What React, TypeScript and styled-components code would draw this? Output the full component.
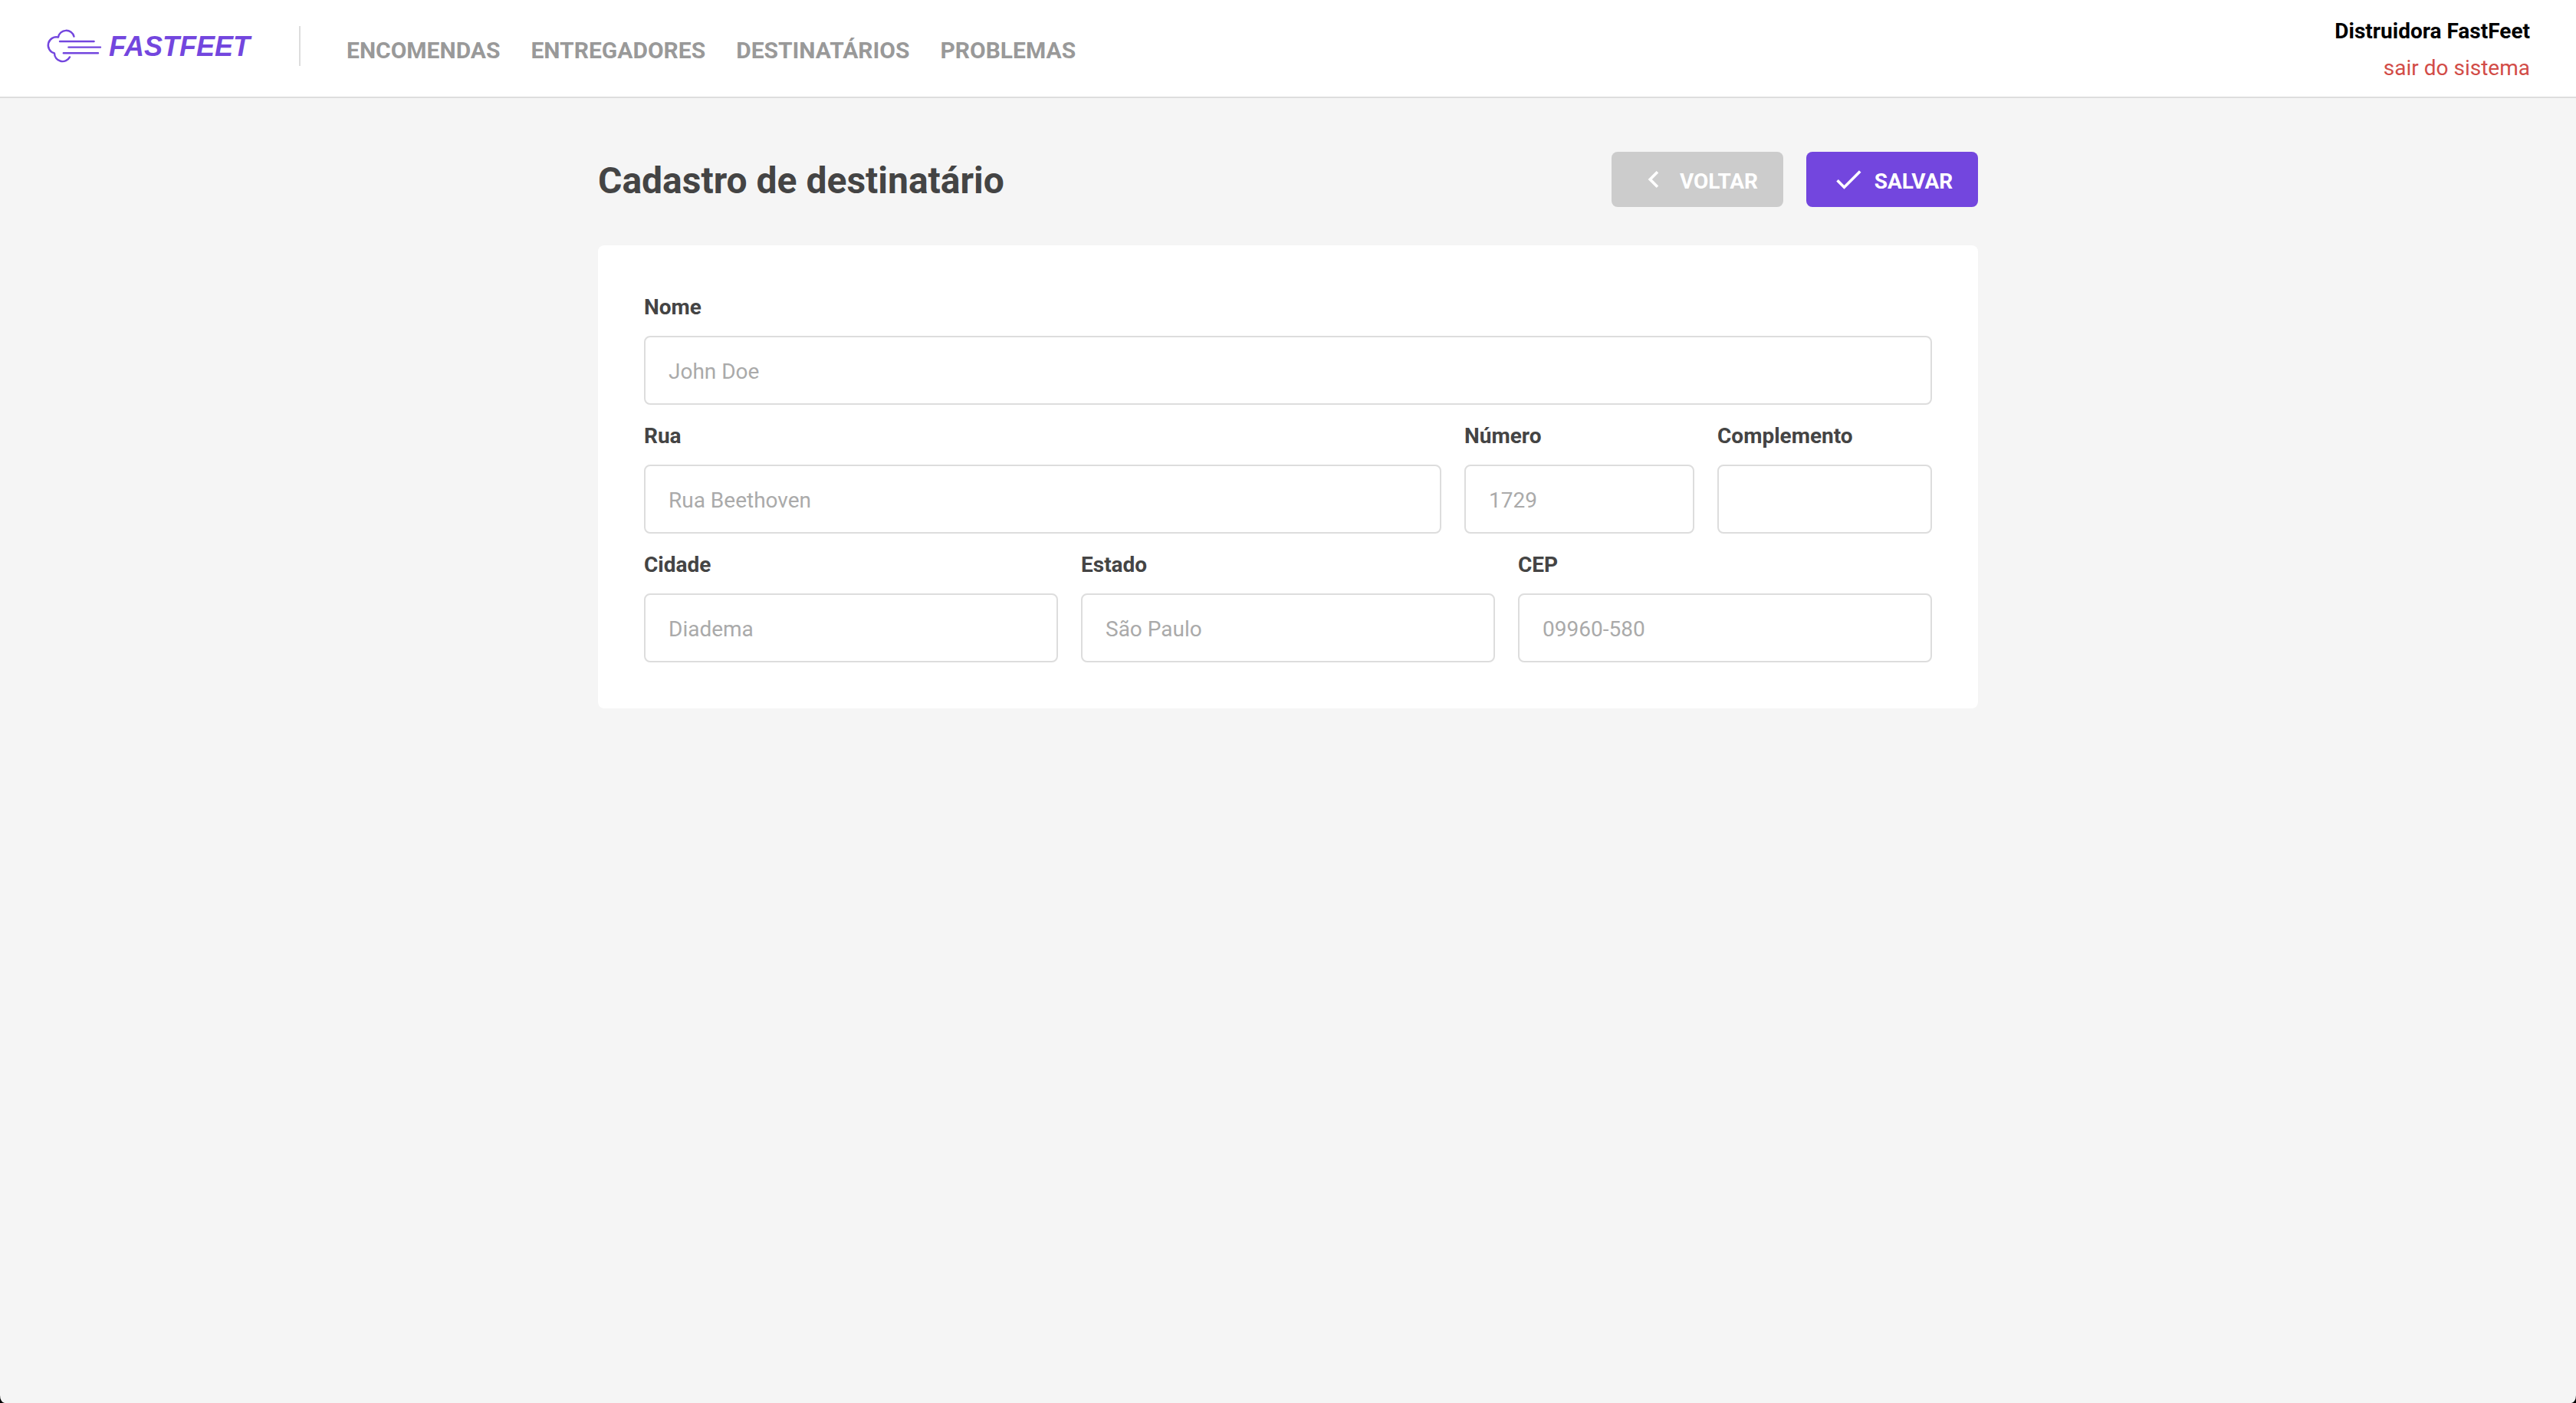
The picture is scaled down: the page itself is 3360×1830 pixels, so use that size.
import React from 'react';
import styled, { createGlobalStyle } from 'styled-components';
import { MdCheck, MdChevronLeft } from 'react-icons/md';

const GlobalStyle = createGlobalStyle`
  *, *::before, *::after {
    margin: 0;
    padding: 0;
    box-sizing: border-box;
  }

  html {
    background: #000;
  }

  body, input, button {
    font-family: Roboto, "Liberation Sans", sans-serif;
    font-size: 28px;
  }

  a {
    text-decoration: none;
  }

  ul {
    list-style: none;
  }
`;

const Page = styled.div`
  min-height: 100vh;
  background: #f5f5f5;
  border-radius: 0 0 6px 6px / 0 0 10px 10px;
`;

const Header = styled.header`
  display: flex;
  justify-content: space-between;
  align-items: stretch;
  height: 128px;
  padding: 0 60px;
  background: #fff;
  border-bottom: 2px solid #ddd;
`;

const HeaderSide = styled.div`
  display: flex;
  align-items: center;
`;

const Brand = styled.div`
  display: flex;
  align-items: center;
  height: 52px;
  margin-bottom: 6px;
  padding-right: 60px;
  border-right: 2px solid #ddd;
`;

const Logo = styled.a`
  display: flex;
  align-items: center;
  gap: 8px;
  width: 270px;
  color: #7346de;
  font: italic bold 36px/40px "Liberation Sans", Arial, sans-serif;

  svg {
    display: block;
    flex: none;
  }

  span {
    padding-top: 2px;
  }
`;

const Menu = styled.ul`
  display: flex;
  gap: 40px;
  padding: 6px 0 0 60px;
`;

const MenuLink = styled.a`
  color: #999;
  font-size: 30px;
  line-height: 36px;
  font-weight: bold;
`;

const User = styled.div`
  display: flex;
  flex-direction: column;
  justify-content: center;
  align-items: flex-end;
  padding-top: 4px;
  line-height: 48px;
`;

const UserName = styled.strong`
  color: #000;
`;

const LogoutButton = styled.button`
  border: 0;
  background: none;
  color: #d24c47;
  line-height: 48px;
  cursor: pointer;
`;

const Main = styled.main`
  max-width: 1800px;
  margin: 0 auto;
  padding: 70px 0;
`;

const TitleBar = styled.div`
  display: flex;
  justify-content: space-between;
  align-items: center;
  margin-bottom: 50px;
`;

const Title = styled.h1`
  padding-top: 4px;
  color: #444;
  font-size: 48px;
  line-height: 60px;
`;

const Actions = styled.div`
  display: flex;
  gap: 30px;
`;

const ActionButton = styled.button<{ $primary?: boolean }>`
  display: flex;
  justify-content: center;
  align-items: center;
  gap: 12px;
  width: 224px;
  height: 72px;
  border: 0;
  border-radius: 8px;
  background: ${({ $primary }) => ($primary ? '#7346de' : '#ccc')};
  color: #fff;
  font-weight: bold;
  cursor: pointer;

  span {
    padding-top: 4px;
  }
`;

const Card = styled.form`
  display: flex;
  flex-direction: column;
  gap: 20px;
  padding: 60px;
  border-radius: 8px;
  background: #fff;
`;

const Row = styled.div<{ $columns: string }>`
  display: grid;
  grid-template-columns: ${({ $columns }) => $columns};
  gap: 30px;
`;

const FieldBox = styled.div`
  display: flex;
  flex-direction: column;
  gap: 16px;
  min-width: 0;
`;

const Label = styled.label`
  color: #444;
  font-weight: bold;
  line-height: 42px;
`;

const Input = styled.input`
  width: 100%;
  height: 90px;
  padding: 2px 30px 0;
  border: 2px solid #ddd;
  border-radius: 8px;
  background: #fff;
  color: #444;

  &::placeholder {
    color: #aaa;
    opacity: 1;
  }
`;

interface FieldProps {
  name: string;
  label: string;
  placeholder?: string;
}

function Field({ name, label, placeholder }: FieldProps) {
  return (
    <FieldBox>
      <Label htmlFor={name}>{label}</Label>
      <Input id={name} name={name} type="text" placeholder={placeholder} />
    </FieldBox>
  );
}

function CloudMark() {
  return (
    <svg
      width="74"
      height="48"
      viewBox="20 16 74 48"
      fill="none"
      stroke="currentColor"
      strokeWidth="2.4"
      strokeLinecap="round"
      strokeLinejoin="round"
      aria-hidden="true"
    >
      <path d="M56.5 27.6A10.5 10.5 0 0 0 36 28.6A10.6 10.6 0 1 0 31 49.4A10.6 10.6 0 0 0 51 54.4" />
      <path d="M38 34H82.6M49.4 41.6H91M42.8 49.2H88" />
    </svg>
  );
}

const menu = ['ENCOMENDAS', 'ENTREGADORES', 'DESTINATÁRIOS', 'PROBLEMAS'];

export default function App() {
  return (
    <>
      <GlobalStyle />
      <Page>
        <Header>
          <HeaderSide>
            <Brand>
              <Logo href="#">
                <CloudMark />
                <span>FASTFEET</span>
              </Logo>
            </Brand>
            <nav>
              <Menu>
                {menu.map((item) => (
                  <li key={item}>
                    <MenuLink href="#">{item}</MenuLink>
                  </li>
                ))}
              </Menu>
            </nav>
          </HeaderSide>
          <User>
            <UserName>Distruidora FastFeet</UserName>
            <LogoutButton type="button">sair do sistema</LogoutButton>
          </User>
        </Header>

        <Main>
          <TitleBar>
            <Title>Cadastro de destinatário</Title>
            <Actions>
              <ActionButton type="button">
                <MdChevronLeft size={44} />
                <span>VOLTAR</span>
              </ActionButton>
              <ActionButton type="submit" form="recipient" $primary>
                <MdCheck size={44} />
                <span>SALVAR</span>
              </ActionButton>
            </Actions>
          </TitleBar>

          <Card id="recipient">
            <Row $columns="1fr">
              <Field name="name" label="Nome" placeholder="John Doe" />
            </Row>
            <Row $columns="52fr 15fr 14fr">
              <Field name="street" label="Rua" placeholder="Rua Beethoven" />
              <Field name="number" label="Número" placeholder="1729" />
              <Field name="complement" label="Complemento" />
            </Row>
            <Row $columns="1fr 1fr 1fr">
              <Field name="city" label="Cidade" placeholder="Diadema" />
              <Field name="state" label="Estado" placeholder="São Paulo" />
              <Field name="zip" label="CEP" placeholder="09960-580" />
            </Row>
          </Card>
        </Main>
      </Page>
    </>
  );
}
